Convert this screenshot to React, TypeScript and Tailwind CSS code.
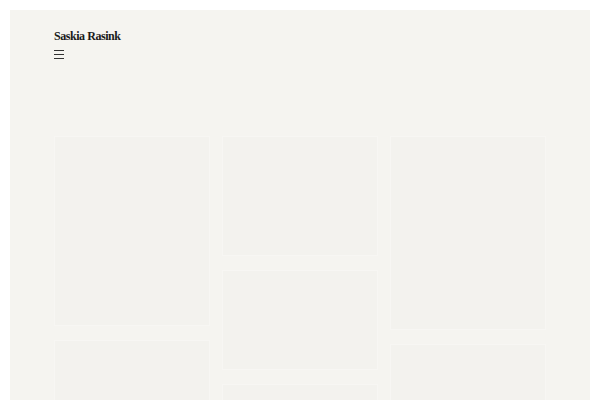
const columns = [
  [190, 120],
  [120, 100, 80],
  [194, 100],
];

const Card = ({ height }: { height: number }) => (
  <div
    className="w-full bg-[#f3f2ee] border border-[#f7f6f3] shrink-0"
    style={{ height }}
  />
);

export default function App() {
  return (
    <div className="h-[400px] w-[600px] overflow-hidden bg-white px-[10px] pt-[10px]">
      <div className="h-full bg-[#f5f4f0] px-[44px] pt-[19px]">
        <header className="flex flex-col items-start">
          <h1 className="font-['Liberation_Serif',serif] text-[12px] font-bold leading-[14px] tracking-[-0.45px] text-[#1a1a1a]">
            Saskia Rasink
          </h1>
          <button className="mt-[7px] flex h-[9px] w-[10px] flex-col justify-between">
            <span className="block h-px w-full bg-[#333]" />
            <span className="block h-px w-full bg-[#333]" />
            <span className="block h-px w-full bg-[#333]" />
          </button>
        </header>

        <div className="mt-[77px] grid grid-cols-3 gap-x-[12px]">
          {columns.map((col, i) => (
            <div className="flex flex-col gap-[14px]" key={i}>
              {col.map((h, j) => (
                <Card height={h} key={j} />
              ))}
            </div>
          ))}
        </div>
      </div>
    </div>
  );
}
